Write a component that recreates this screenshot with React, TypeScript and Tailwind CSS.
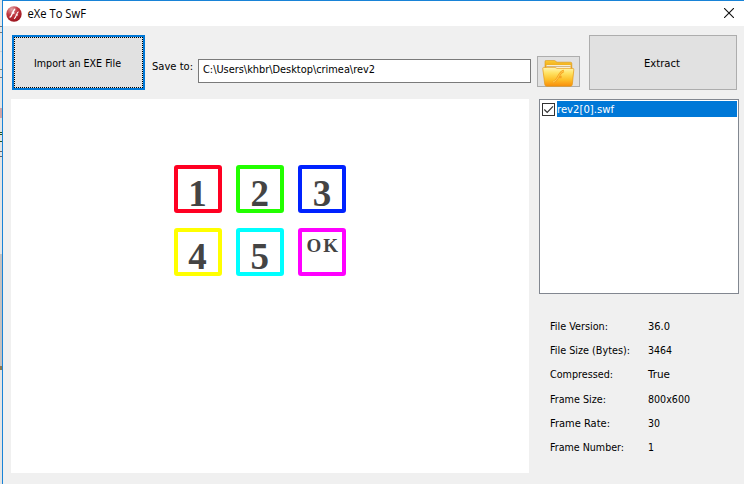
import React from "react";

const font = "font-['DejaVu_Sans_Condensed','DejaVu_Sans',sans-serif]";

function Label({ text, width, className = "" }: { text: string; width: number; className?: string }) {
  return (
    <svg width={width + 2} height={16} className={`block shrink-0 overflow-visible ${className}`}>
      <text x={0} y={12} fontSize={11} textLength={width} lengthAdjust="spacingAndGlyphs" fill="currentColor">
        {text}
      </text>
    </svg>
  );
}

const keys = [
  { t: "1", c: "border-[#ff0022]" },
  { t: "2", c: "border-[#22ff00]" },
  { t: "3", c: "border-[#0022ff]" },
  { t: "4", c: "border-[#ffff00]" },
  { t: "5", c: "border-[#00ffff]" },
  { t: "OK", c: "border-[#ff00ff]" },
];

const info: { label: string; w: number; value: string; vw: number; h: string }[] = [
  { label: "File Version:", w: 58, value: "36.0", vw: 22, h: "h-6" },
  { label: "File Size (Bytes):", w: 80, value: "3464", vw: 24, h: "h-6" },
  { label: "Compressed:", w: 63, value: "True", vw: 22, h: "h-[25px]" },
  { label: "Frame Size:", w: 56, value: "800x600", vw: 42, h: "h-6" },
  { label: "Frame Rate:", w: 60, value: "30", vw: 12, h: "h-6" },
  { label: "Frame Number:", w: 74, value: "1", vw: 6, h: "h-6" },
];

function FlashIcon() {
  return (
    <svg width="16" height="16" viewBox="0 0 16 16" className="shrink-0">
      <defs>
        <radialGradient id="red" cx="0.35" cy="0.2" r="0.85">
          <stop offset="0" stopColor="#e0a3a6" />
          <stop offset="0.45" stopColor="#c23a42" />
          <stop offset="1" stopColor="#99101a" />
        </radialGradient>
      </defs>
      <circle cx="8" cy="8" r="7.7" fill="url(#red)" />
      <path d="M9.2 3.2C6.6 3.6 6.6 10.4 3.6 11.4M5.6 7H8.4" stroke="#fff" strokeWidth="1.4" fill="none" />
      <path d="M12.6 5.8C10.2 6.2 10.6 12 8 12.7M9.6 9H12" stroke="#fff" strokeWidth="1.1" fill="none" />
    </svg>
  );
}

function FolderIcon() {
  return (
    <svg width="33" height="27" viewBox="0 0 33 27" className="block">
      <defs>
        <linearGradient id="front" x1="0" y1="0" x2="0" y2="1">
          <stop offset="0" stopColor="#fff6b4" />
          <stop offset="0.3" stopColor="#ffe263" />
          <stop offset="0.65" stopColor="#fdc02a" />
          <stop offset="1" stopColor="#f98d0c" />
        </linearGradient>
        <linearGradient id="back" x1="0" y1="0" x2="0" y2="1">
          <stop offset="0" stopColor="#fccb32" />
          <stop offset="1" stopColor="#e79409" />
        </linearGradient>
      </defs>
      <path d="M3 10V1.6Q3 .4 4.2 .4H12.5L15 2.2H28.5Q29.8 2.2 29.8 3.5V10Z" fill="url(#back)" stroke="#d99414" strokeWidth=".6" />
      <path d="M4.5 5H28.6V9H4.5Z" fill="#fff5dc" />
      <path d="M4.5 6.4H28.6" stroke="#9c8150" strokeWidth=".6" />
      <path d="M1.5 7.4H13L15 8.4H31Q32 8.4 31.8 9.8L30.3 24.6Q30.1 26.2 28.5 26.2H4.7Q3 26.2 2.8 24.6L.8 8.9Q.7 7.4 1.5 7.4Z" fill="url(#front)" stroke="#e59912" strokeWidth=".7" />
      <path d="M22 11C16 11.8 17 20.8 10.8 22.6M15.8 17H19.6" stroke="#f6a423" strokeWidth="2.4" fill="none" />
      <path d="M21.8 11C16.6 11.8 17 20.2 11 22" stroke="#ffcc4d" strokeWidth="1" fill="none" />
    </svg>
  );
}

export default function App() {
  return (
    <div className={`flex h-[484px] w-[744px] overflow-hidden bg-[#f0f0f0] text-black ${font}`}>
      <div className="flex w-[2px] shrink-0 flex-col bg-[#e4e4e4]">
        <div className="h-[27px] border-b border-[#777] bg-[#e9e9e9]" />
        <div className="h-[6px] border-b border-[#777]" />
        <div className="h-[19px] border-b border-[#ccc]" />
        <div className="h-[18px] border-b border-[#8a8a70]" />
        <div className="h-[8px] border-b border-[#777]" />
        <div className="mt-[30px] h-[10px] bg-[#d0a5a5]" />
        <div className="mt-[14px] h-[3px] border-y border-[#205520]" />
        <div className="h-[7px] border-b border-[#205520]" />
        <div className="h-[10px] border-b border-[#666]" />
        <div className="h-[5px] border-b border-[#666]" />
        <div className="h-[97px]" />
        <div className="h-[112px] bg-[#c5c1bf]" />
        <div className="h-1 bg-[#8d7950]" />
      </div>
      <main className="flex min-w-0 grow flex-col border-l border-t border-[#1883d7]">
        <header className="flex h-[25px] shrink-0 items-center bg-white pl-[3px]">
          <FlashIcon />
          <svg width="61" height="18" className="ml-[5px] overflow-visible">
            <text x="0.5" y="13" fontSize="12" textLength="58.5" lengthAdjust="spacingAndGlyphs" className="font-['Open_Sans','Noto_Sans',sans-serif]">eXe To SwF</text>
          </svg>
          <svg width="10" height="10" viewBox="0 0 10 10" className="mb-px ml-auto mr-[10px]">
            <path d="M0 0L10 10M10 0L0 10" stroke="#111" strokeWidth="1.1" />
          </svg>
        </header>
        <section className="flex h-[73px] shrink-0 items-start pl-[9px] pt-[9px]">
          <button className="h-[55px] w-[133px] border-2 border-[#0078d7] bg-[#e1e1e1]">
            <span className="flex h-full w-full items-center justify-center border border-dotted border-black">
              <Label text="Import an EXE File" width={87} />
            </span>
          </button>
          <Label text="Save to:" width={41} className="ml-[7px] mt-[23px]" />
          <div className="ml-[3px] mt-6 flex h-6 w-[333px] border border-[#7a7a7a] bg-white pl-1 pt-px">
            <Label text="C:\Users\khbr\Desktop\crimea\rev2" width={172} />
          </div>
          <button className="ml-[6px] mt-[21px] flex h-[31px] w-[43px] items-start border border-[#adadad] bg-[#e1e1e1] pl-1 pt-[3px]">
            <FolderIcon />
          </button>
          <button className="ml-[9px] flex h-[55px] w-[148px] items-center justify-center border border-[#adadad] bg-[#e1e1e1]">
            <Label text="Extract" width={36} />
          </button>
        </section>
        <section className="flex pl-2">
          <div className="h-[374px] w-[518px] bg-white pl-[163px] pt-[66px]">
            <div className="grid w-[172px] grid-cols-[48px_48px_48px] gap-x-[14.2px] gap-y-[14.5px]">
              {keys.map((k) => (
                <div key={k.t} className={`flex h-12 w-12 justify-center rounded-[3px] border-4 font-['Liberation_Serif',serif] font-bold text-[#444] ${k.c}`}>
                  {k.t === "OK" ? (
                    <span className="mt-[3px] pl-[2px] text-[19px] leading-[22px] tracking-[2px]">OK</span>
                  ) : (
                    <span className="mt-[6px] pr-px text-[37px] leading-[38px]">{k.t}</span>
                  )}
                </div>
              ))}
            </div>
          </div>
          <aside className="ml-[10px] w-[200px]">
            <div className="h-[195px] border border-[#828790] bg-white p-px">
              <div className="flex h-4 items-center pl-px">
                <svg width="13" height="13" className="shrink-0">
                  <rect x=".5" y=".5" width="12" height="12" fill="#fff" stroke="#333" />
                  <path d="M2.3 6.5L5.2 9.4L11 3.4" stroke="#333" strokeWidth="1.2" fill="none" />
                </svg>
                <div className="ml-[2px] h-4 grow bg-[#0078d7] text-white">
                  <Label text="rev2[0].swf" width={57} />
                </div>
              </div>
            </div>
            <dl className="pl-[11px] pt-[24px]">
              {info.map((r) => (
                <div key={r.label} className={`flex ${r.h}`}>
                  <dt className="w-[97.5px]"><Label text={r.label} width={r.w} /></dt>
                  <dd><Label text={r.value} width={r.vw} /></dd>
                </div>
              ))}
            </dl>
          </aside>
        </section>
      </main>
    </div>
  );
}
